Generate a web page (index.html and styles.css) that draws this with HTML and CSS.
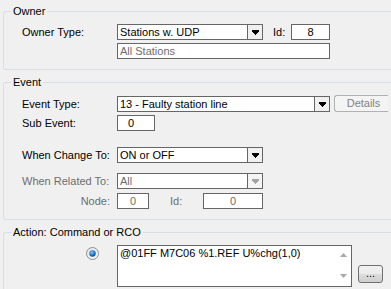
FILE: index.html
```html
<!DOCTYPE html>
<html lang="en">
  <head>
    <meta charset="UTF-8" />
    <title>Event Action</title>
    <link rel="stylesheet" href="styles.css">
  </head>
  <body>
    <fieldset class="group owner">
      <legend>Owner</legend>
      <div class="row first">
        <span class="lbl">Owner Type:</span>
        <div class="combo w146">
          <span class="val">Stations w. UDP</span>
          <span class="drop"><svg width="7" height="5" viewBox="0 0 7 5"><path d="M0 0h7v2h-1v1h-1v1h-1v1h-1v-1h-1v-1h-1v-1h-1z" fill="#000"/></svg></span>
        </div>
        <span class="lbl-id">Id:</span>
        <div class="field center w39">8</div>
      </div>
      <div class="row indent gap3">
        <div class="field hint w213">All Stations</div>
      </div>
    </fieldset>

    <fieldset class="group event">
      <legend>Event</legend>
      <div class="row first">
        <span class="lbl">Event Type:</span>
        <div class="combo w213">
          <span class="val">13 - Faulty station line</span>
          <span class="drop"><svg width="7" height="5" viewBox="0 0 7 5"><path d="M0 0h7v2h-1v1h-1v1h-1v1h-1v-1h-1v-1h-1v-1h-1z" fill="#000"/></svg></span>
        </div>
        <div class="btn details">Details</div>
      </div>
      <div class="row gap3">
        <span class="lbl">Sub Event:</span>
        <div class="field w38 pad10">0</div>
      </div>
      <div class="row gap16">
        <span class="lbl">When Change To:</span>
        <div class="combo w146">
          <span class="val">ON or OFF</span>
          <span class="drop"><svg width="7" height="5" viewBox="0 0 7 5"><path d="M0 0h7v2h-1v1h-1v1h-1v1h-1v-1h-1v-1h-1v-1h-1z" fill="#000"/></svg></span>
        </div>
      </div>
      <div class="row gap10 off">
        <span class="lbl">When Related To:</span>
        <div class="combo w146">
          <span class="val">All</span>
          <span class="drop"><svg width="7" height="5" viewBox="0 0 7 5"><path d="M0 0h7v2h-1v1h-1v1h-1v1h-1v-1h-1v-1h-1v-1h-1z" fill="#a3a3a3"/></svg></span>
        </div>
      </div>
      <div class="row gap4 off">
        <span class="lbl right">Node:</span>
        <div class="field center w32">0</div>
        <span class="lbl-node">Id:</span>
        <div class="field center w60">0</div>
      </div>
    </fieldset>

    <fieldset class="group action">
      <legend>Action: Command or RCO</legend>
      <div class="act">
        <div class="radio-col">
          <svg width="13" height="13" viewBox="0 0 13 13">
            <defs>
              <radialGradient id="dot" cx="40%" cy="35%" r="65%">
                <stop offset="0" stop-color="#8fd0ff"/>
                <stop offset="0.5" stop-color="#2a86d6"/>
                <stop offset="1" stop-color="#0b4f8f"/>
              </radialGradient>
              <linearGradient id="ring" x1="0" y1="0" x2="1" y2="1">
                <stop offset="0" stop-color="#e4e4e4"/>
                <stop offset="1" stop-color="#fafafa"/>
              </linearGradient>
            </defs>
            <circle cx="6.5" cy="6.5" r="6" fill="url(#ring)" stroke="#8e8f8f"/>
            <circle cx="6.5" cy="6.5" r="3.2" fill="url(#dot)"/>
          </svg>
        </div>
        <div class="memo">
          <div class="txt">@01FF M7C06 %1.REF U%chg(1,0)</div>
          <div class="sb">
            <svg width="7" height="4" viewBox="0 0 7 4"><path d="M3.5 0L7 4H0z" fill="#a8a8a8"/></svg>
            <svg width="7" height="4" viewBox="0 0 7 4"><path d="M0 0h7L3.5 4z" fill="#a8a8a8"/></svg>
          </div>
        </div>
        <div class="btn dots">...</div>
      </div>
    </fieldset>
  </body>
</html>
```
FILE: styles.css
```css
* {
  box-sizing: border-box;
}
html,
body {
  margin: 0;
  overflow: hidden;
}
body {
  width: 391px;
  height: 289px;
  background: #f0f0f0;
  color: #000;
  font-family: "Liberation Sans", Arial, sans-serif;
  font-size: 11px;
}
/* group box runs off the right edge, so no right border */
.group {
  margin: 6px 0 0 3px;
  padding: 0 0 10px 7px;
  border: 1px solid #d5dfe5;
  border-right: none;
  border-radius: 3px 0 0 3px;
  min-width: 0;
}
.owner {
  margin-top: 5px;
}
.group legend {
  padding: 0 2px;
  height: 13px;
  line-height: 13px;
}
.row {
  display: flex;
  align-items: center;
  height: 16px;
  padding-left: 11px;
  white-space: nowrap;
}
.owner .first {
  margin-top: 6px;
}
.event .first {
  margin-top: 7px;
}
.indent {
  padding-left: 106px;
}
.gap3 {
  margin-top: 3px;
}
.gap4 {
  margin-top: 4px;
}
.gap10 {
  margin-top: 10px;
}
.gap16 {
  margin-top: 16px;
}
.lbl {
  width: 95px;
}
.lbl.right {
  text-align: right;
  padding-right: 7px;
}
.lbl-id {
  width: 18px;
  margin-left: 10px;
}
.lbl-node {
  width: 33px;
  margin-left: 21px;
}
.field,
.combo {
  height: 16px;
  border: 1px solid #666;
  background: #fff;
  line-height: 14px;
  overflow: hidden;
}
.field {
  padding: 0 2px;
}
.center {
  text-align: center;
}
.pad10 {
  padding-left: 10px;
}
.hint {
  color: #6d6d6d;
}
.combo {
  display: flex;
}
.combo .val {
  flex: 1;
  padding: 0 2px;
}
.combo .drop {
  width: 15px;
  border-left: 1px solid #666;
  background: #f0f0f0;
  display: flex;
  align-items: center;
  justify-content: center;
}
.off {
  color: #6d6d6d;
}
.off .combo .drop {
  background: #f4f4f4;
}
.w32 { width: 32px; }
.w38 { width: 38px; }
.w39 { width: 39px; }
.w60 { width: 60px; }
.w146 { width: 146px; }
.w213 { width: 213px; }
.btn {
  border-radius: 3px;
  text-align: center;
}
.details {
  align-self: flex-start;
  flex-shrink: 0;
  width: 54px;
  height: 17px;
  margin: -1px 0 0 4px;
  border: 1px solid #adb2b5;
  border-right: none;
  border-radius: 3px 0 0 3px;
  background: #f4f4f4;
  color: #838383;
  line-height: 15px;
  text-indent: 4px;
}
.act {
  display: flex;
  align-items: flex-start;
  margin-top: 6px;
  padding-left: 11px;
}
.radio-col {
  width: 95px;
  padding: 2px 0 0 64px;
}
.radio-col svg {
  display: block;
}
.memo {
  display: flex;
  width: 235px;
  height: 42px;
  border: 1px solid #666;
  background: #fff;
}
.memo .txt {
  flex: 1;
  padding: 1px 2px;
  line-height: 13px;
}
.memo .sb {
  width: 16px;
  display: flex;
  flex-direction: column;
  justify-content: space-between;
  align-items: center;
  padding: 7px 0 8px;
}
.memo .sb svg {
  display: block;
}
.dots {
  width: 25px;
  height: 18px;
  margin: 20px 0 0 6px;
  border: 1px solid #707070;
  background: linear-gradient(#f2f2f2, #ebebeb 50%, #dddddd 50%, #cfcfcf);
  line-height: 14px;
}
```
